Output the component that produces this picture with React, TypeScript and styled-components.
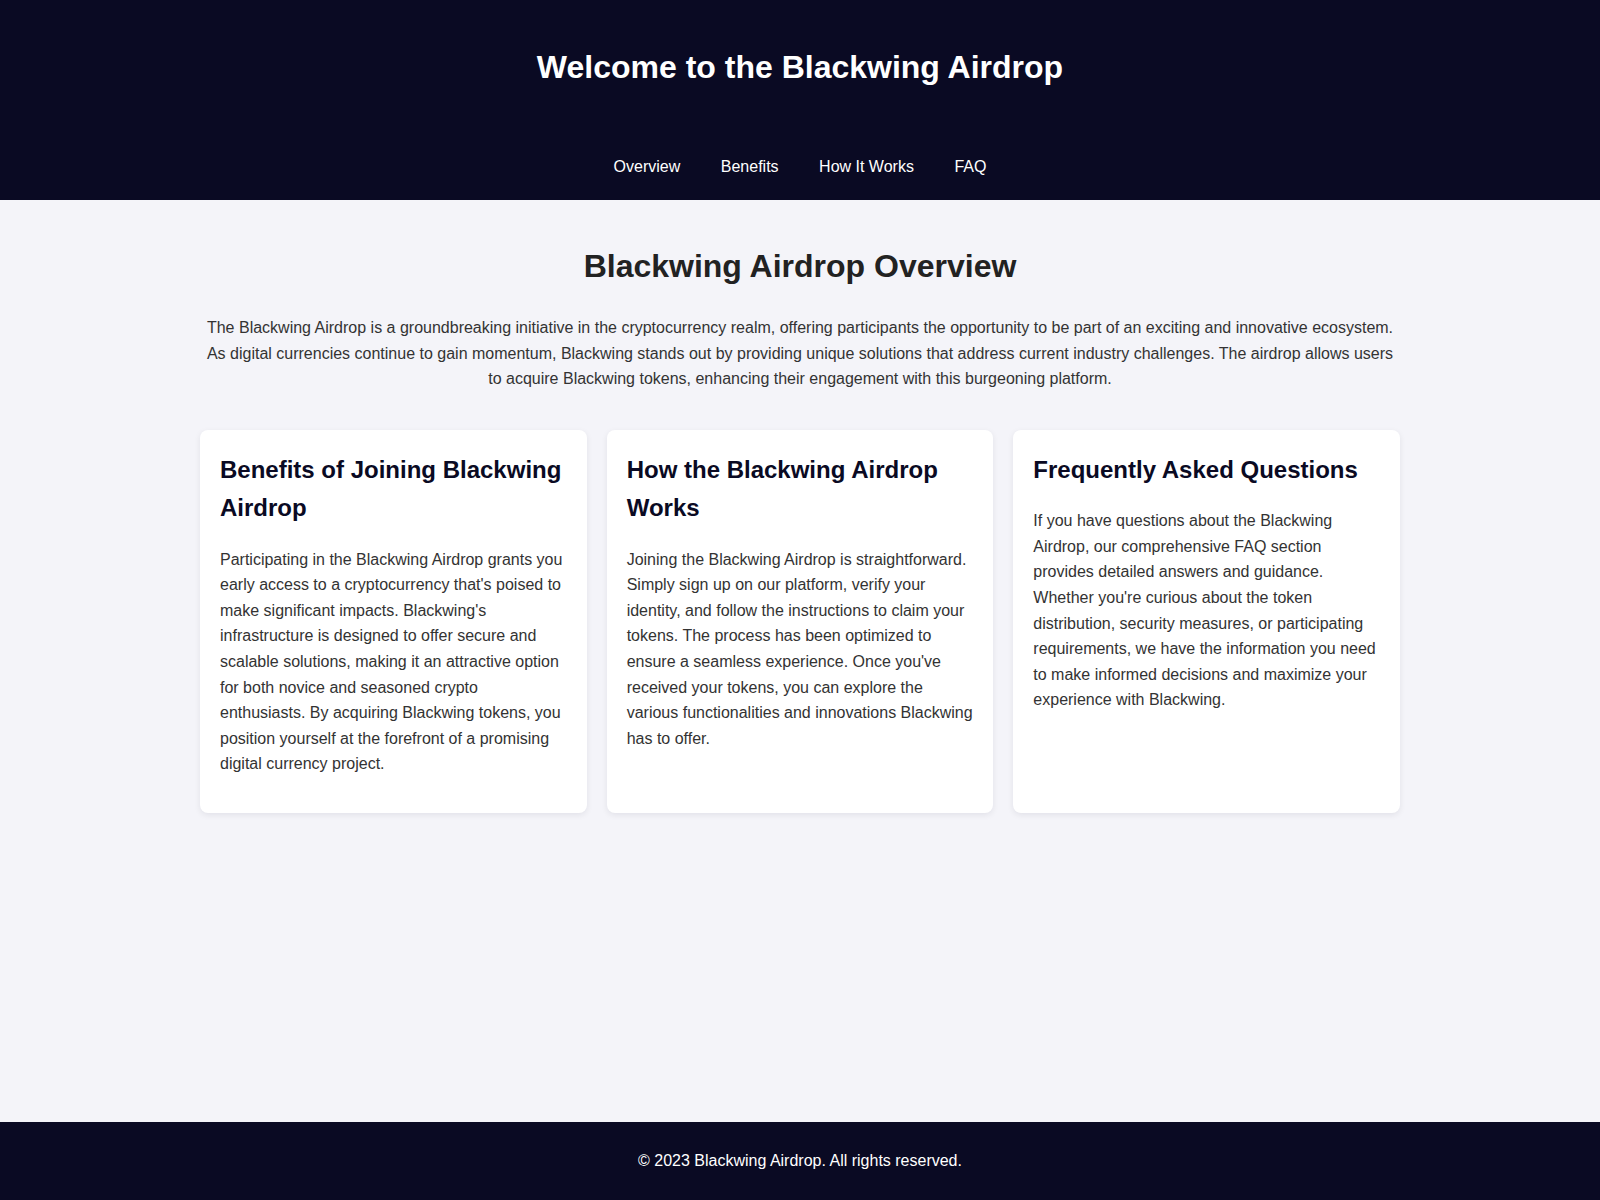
import React from "react";
import styled, { createGlobalStyle } from "styled-components";

const GlobalStyle = createGlobalStyle`
  html, body {
    margin: 0;
    padding: 0;
  }
  body {
    font-family: "Liberation Sans", Arial, sans-serif;
    background: #f4f4f9;
    color: #333;
    line-height: 1.6;
  }
  * { box-sizing: border-box; }
`;

const Page = styled.div`
  min-height: 100vh;
  display: flex;
  flex-direction: column;
`;

const Header = styled.header`
  background: #0a0a23;
  color: #fff;
  display: flex;
  flex-direction: column;
  align-items: center;
  padding: 42px 20px 20px;
`;

const Title = styled.h1`
  margin: 0 0 61px;
  font-size: 32px;
  font-weight: 700;
  line-height: 1.6;
`;

const Nav = styled.nav`
  display: flex;
  gap: 40.5px;
`;

const NavLink = styled.a`
  color: #fff;
  text-decoration: none;
  font-size: 16px;
  line-height: 1.6;
`;

const Main = styled.main`
  flex: 1;
  width: 1200px;
  margin: 0 auto;
  padding-top: 41px;
`;

const SectionTitle = styled.h2`
  margin: 0 0 23px;
  text-align: center;
  font-size: 32px;
  line-height: 1.6;
  color: #222;
`;

const Intro = styled.p`
  margin: 0 0 38px;
  text-align: center;
  font-size: 16px;
  line-height: 1.6;
`;

const Cards = styled.div`
  display: grid;
  grid-template-columns: repeat(3, 1fr);
  gap: 20px;
`;

const Card = styled.section`
  background: #fff;
  border-radius: 8px;
  padding: 21px 20px 20px;
  box-shadow: 0 2px 6px rgba(10, 10, 35, 0.08);
`;

const CardTitle = styled.h3`
  margin: 0 0 19px;
  font-size: 24px;
  line-height: 1.6;
  color: #0a0a23;
`;

const CardText = styled.p`
  margin: 0 0 16px;
  font-size: 16px;
  line-height: 1.6;
  color: #333;
`;

const Footer = styled.footer`
  background: #0a0a23;
  color: #fff;
  text-align: center;
  padding: 26px 20px;
  font-size: 16px;
  line-height: 1.6;
`;

const cards = [
  {
    title: "Benefits of Joining Blackwing Airdrop",
    text: "Participating in the Blackwing Airdrop grants you early access to a cryptocurrency that's poised to make significant impacts. Blackwing's infrastructure is designed to offer secure and scalable solutions, making it an attractive option for both novice and seasoned crypto enthusiasts. By acquiring Blackwing tokens, you position yourself at the forefront of a promising digital currency project.",
  },
  {
    title: "How the Blackwing Airdrop Works",
    text: "Joining the Blackwing Airdrop is straightforward. Simply sign up on our platform, verify your identity, and follow the instructions to claim your tokens. The process has been optimized to ensure a seamless experience. Once you've received your tokens, you can explore the various functionalities and innovations Blackwing has to offer.",
  },
  {
    title: "Frequently Asked Questions",
    text: "If you have questions about the Blackwing Airdrop, our comprehensive FAQ section provides detailed answers and guidance. Whether you're curious about the token distribution, security measures, or participating requirements, we have the information you need to make informed decisions and maximize your experience with Blackwing.",
  },
];

export default function App() {
  return (
    <>
      <GlobalStyle />
      <Page>
        <Header>
          <Title>Welcome to the Blackwing Airdrop</Title>
          <Nav>
            <NavLink href="#overview">Overview</NavLink>
            <NavLink href="#benefits">Benefits</NavLink>
            <NavLink href="#how">How It Works</NavLink>
            <NavLink href="#faq">FAQ</NavLink>
          </Nav>
        </Header>
        <Main>
          <SectionTitle>Blackwing Airdrop Overview</SectionTitle>
          <Intro>
            The Blackwing Airdrop is a groundbreaking initiative in the cryptocurrency realm, offering participants the opportunity to be part of an exciting and innovative ecosystem. As digital currencies continue to gain momentum, Blackwing stands out by providing unique solutions that address current industry challenges. The airdrop allows users to acquire Blackwing tokens, enhancing their engagement with this burgeoning platform.
          </Intro>
          <Cards>
            {cards.map((c) => (
              <Card key={c.title}>
                <CardTitle>{c.title}</CardTitle>
                <CardText>{c.text}</CardText>
              </Card>
            ))}
          </Cards>
        </Main>
        <Footer>© 2023 Blackwing Airdrop. All rights reserved.</Footer>
      </Page>
    </>
  );
}
